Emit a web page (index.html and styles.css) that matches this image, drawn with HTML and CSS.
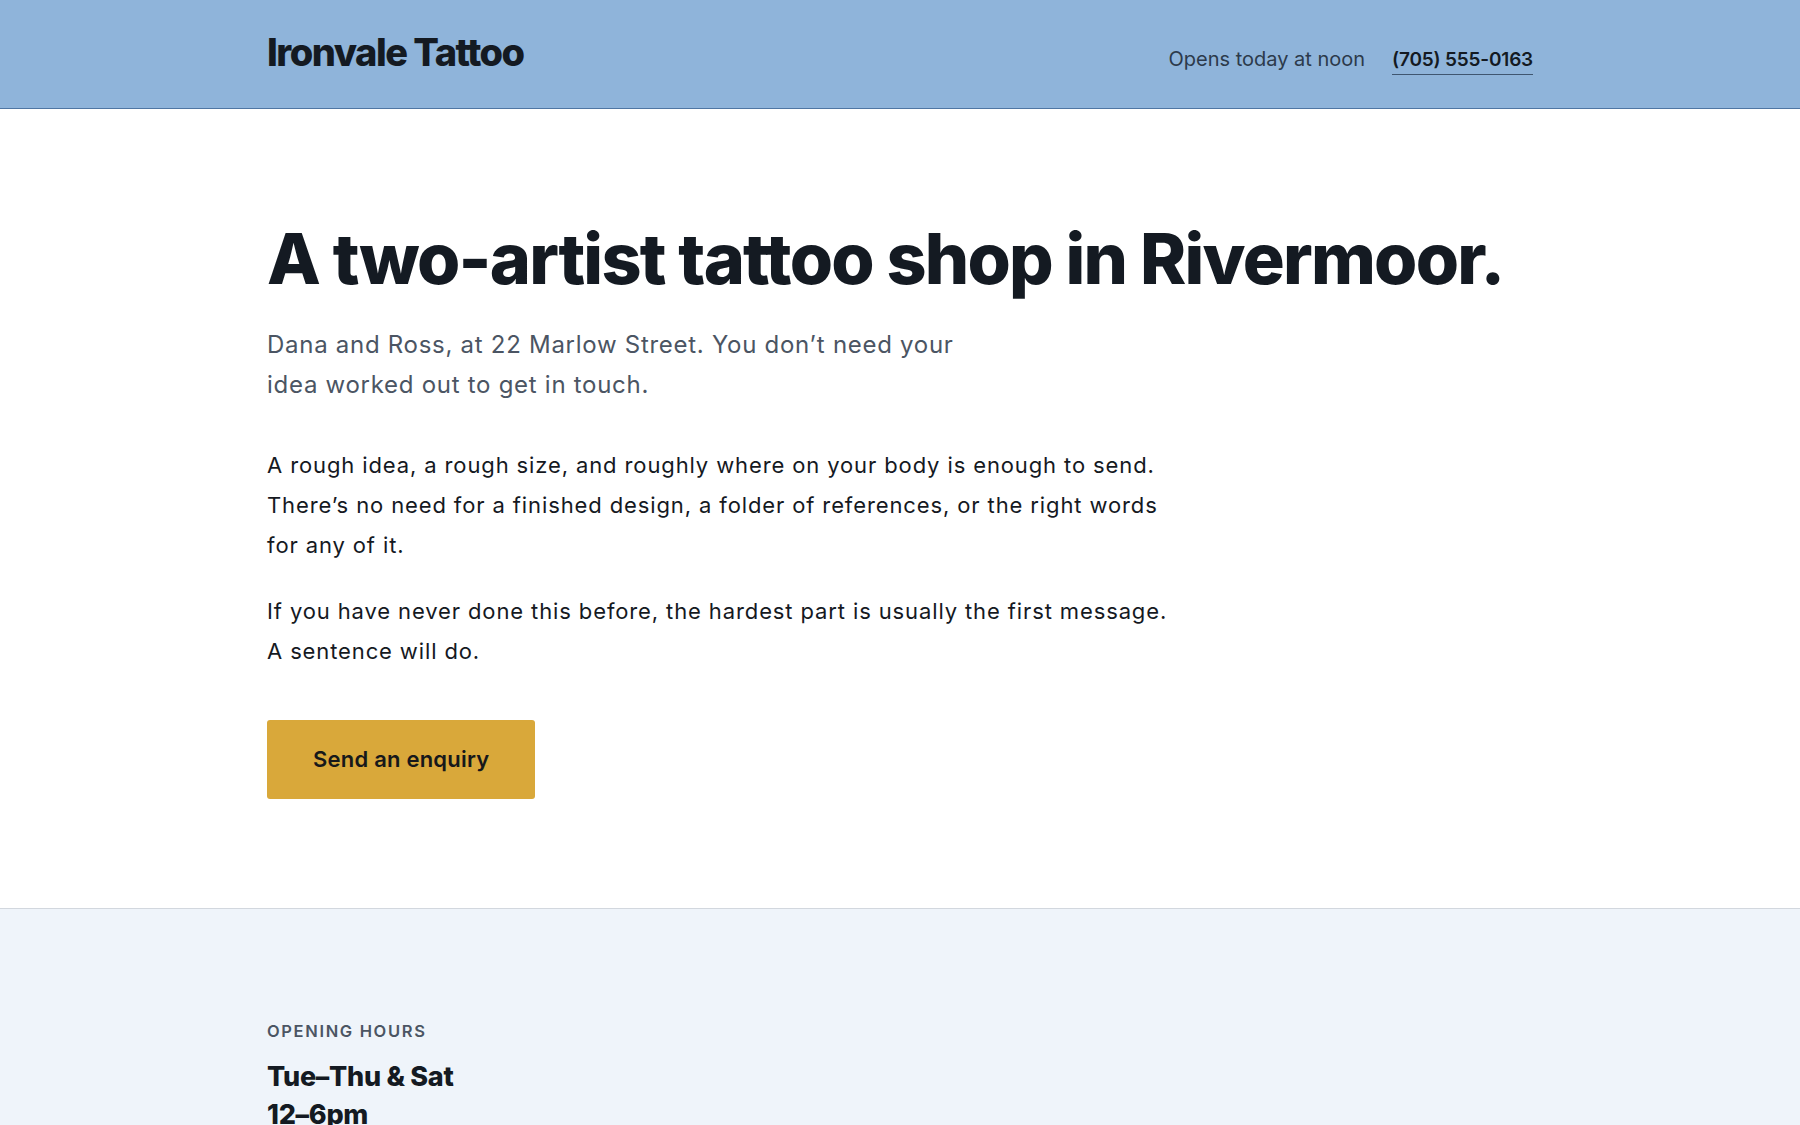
FILE: index.html
```html
<!DOCTYPE html>
<html lang="en">
<head>
    <meta charset="UTF-8">
    <meta name="viewport" content="width=device-width, initial-scale=1.0">
    <title>Ironvale Tattoo</title>
    <link rel="stylesheet" href="styles.css">
</head>
<body>
    <header class="topbar">
        <div class="wrap topbar-inner">
            <a class="logo" href="#">Ironvale Tattoo</a>
            <div class="topbar-info">
                <span class="opens">Opens today at noon</span>
                <a class="phone" href="#">(705) 555-0163</a>
            </div>
        </div>
    </header>

    <main>
        <section class="hero">
            <div class="wrap">
                <h1>A two-artist tattoo shop in Rivermoor.</h1>
                <p class="lead">Dana and Ross, at 22 Marlow Street. You don’t need your idea worked out to get in touch.</p>
                <p class="body-text">A rough idea, a rough size, and roughly where on your body is enough to send. There’s no need for a finished design, a folder of references, or the right words for any of it.</p>
                <p class="body-text">If you have never done this before, the hardest part is usually the first message. A sentence will do.</p>
                <div class="cta">
                    <a class="btn" href="#">Send an enquiry</a>
                </div>
            </div>
        </section>

        <!-- Horario -->
        <section class="hours">
            <div class="wrap">
                <h4 class="label">Opening hours</h4>
                <p class="hours-main">Tue–Thu &amp; Sat<br>12–6pm</p>
            </div>
        </section>
    </main>
</body>
</html>
```

FILE: styles.css
```css
body {
    margin: 0;
    font-family: 'Inter', sans-serif;
    color: #15191f;
    background-color: #ffffff;
}

a {
    color: inherit;
    text-decoration: none;
}

.wrap {
    max-width: 1266px;
    margin: 0 auto;
}

.topbar {
    background-color: #8fb4da;
    border-bottom: 1px solid #4f76a3;
}

.topbar-inner {
    box-sizing: border-box;
    height: 108px;
    padding-top: 29px;
    display: flex;
    justify-content: space-between;
    align-items: baseline;
}

.logo {
    font-size: 38px;
    font-weight: 800;
    letter-spacing: -0.04em;
    color: #141a22;
}

.topbar-info {
    display: flex;
    align-items: baseline;
    gap: 27px;
}

.opens {
    font-size: 20px;
    color: #2c3a4b;
}

.phone {
    font-size: 19px;
    font-weight: 600;
    letter-spacing: -0.01em;
    color: #141a22;
    padding-bottom: 3px;
    border-bottom: 1px solid #3f5670;
}

.hero {
    padding: 111px 0 109px;
}

h1 {
    font-size: 70px;
    font-weight: 800;
    letter-spacing: -0.025em;
    line-height: 77px;
    margin: 0 0 28px;
    color: #141a22;
}

.lead {
    font-size: 24px;
    letter-spacing: 0.03em;
    line-height: 40px;
    color: #4b5563;
    max-width: 700px;
    margin: 0 0 40px;
}

.body-text {
    font-size: 22px;
    letter-spacing: 0.04em;
    line-height: 40px;
    max-width: 915px;
    margin: 0 0 26px;
}

.cta {
    display: flex;
    margin-top: 49px;
}

.btn {
    background-color: #d9a83a;
    color: #17181a;
    font-size: 22px;
    font-weight: 600;
    letter-spacing: 0.01em;
    line-height: 27px;
    padding: 26px 46px;
    border-radius: 3px;
}

.hours {
    background-color: #eff4fa;
    border-top: 1px solid #d2d7de;
    padding: 112px 0 60px;
}

.label {
    margin: 0 0 17px;
    font-size: 16.5px;
    line-height: 20px;
    font-weight: 600;
    letter-spacing: 0.1em;
    text-transform: uppercase;
    color: #4b5563;
}

.hours-main {
    margin: 0;
    font-size: 27px;
    font-weight: 800;
    letter-spacing: -0.01em;
    line-height: 38px;
    color: #141a22;
}
```
